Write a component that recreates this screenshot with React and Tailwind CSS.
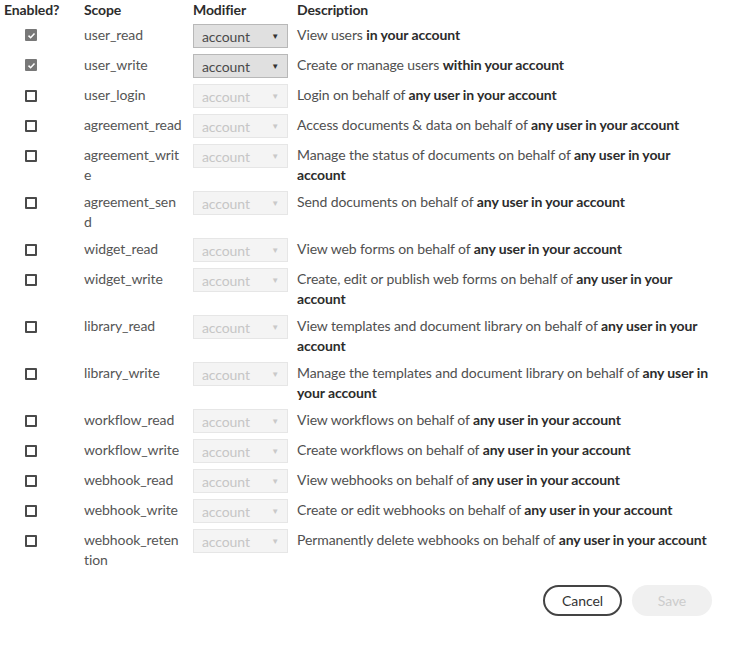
import React, { useState } from "react";

const SCOPES = [
  { name: "user_read", on: true, pre: "View users ", bold: "in your account" },
  { name: "user_write", on: true, pre: "Create or manage users ", bold: "within your account" },
  { name: "user_login", pre: "Login on behalf of ", bold: "any user in your account" },
  { name: "agreement_read", pre: "Access documents & data on behalf of ", bold: "any user in your account" },
  { name: "agreement_writ\ne", pre: "Manage the status of documents on behalf of ", bold: "any user in your\naccount" },
  { name: "agreement_sen\nd", pre: "Send documents on behalf of ", bold: "any user in your account" },
  { name: "widget_read", pre: "View web forms on behalf of ", bold: "any user in your account" },
  { name: "widget_write", pre: "Create, edit or publish web forms on behalf of ", bold: "any user in your\naccount" },
  { name: "library_read", pre: "View templates and document library on behalf of ", bold: "any user in your\naccount" },
  { name: "library_write", pre: "Manage the templates and document library on behalf of ", bold: "any user in\nyour account" },
  { name: "workflow_read", pre: "View workflows on behalf of ", bold: "any user in your account" },
  { name: "workflow_write", pre: "Create workflows on behalf of ", bold: "any user in your account" },
  { name: "webhook_read", pre: "View webhooks on behalf of ", bold: "any user in your account" },
  { name: "webhook_write", pre: "Create or edit webhooks on behalf of ", bold: "any user in your account" },
  { name: "webhook_reten\ntion", pre: "Permanently delete webhooks on behalf of ", bold: "any user in your account" },
];

function Checkbox({ checked, onClick }) {
  if (checked) {
    return (
      <button onClick={onClick} className="mt-[5px] ml-[21px] flex h-3 w-3 items-center justify-center rounded-[1px] bg-[#787878]">
        <svg viewBox="0 0 12 12" className="h-[9px] w-[9px]">
          <path d="M2 6.2 L4.8 9 L10 3.2" fill="none" stroke="#fff" strokeWidth="2" />
        </svg>
      </button>
    );
  }
  return (
    <button onClick={onClick} className="mt-[5px] ml-[21px] h-3 w-3 rounded-[1px] border-2 border-[#4a4a4a] bg-white" />
  );
}

function Modifier({ enabled }) {
  return (
    <div
      className={
        "flex h-6 w-[95px] items-center justify-between border pl-2 pr-2 " +
        (enabled ? "border-[#b8b8b8] bg-[#e0e0e0] text-[#4b4b4b]" : "border-[#e6e6e6] bg-[#f4f4f4] text-[#c6c6c6]")
      }
    >
      <span className="pt-[2px] text-[14px] leading-5">account</span>
      <span className={"text-[8px] " + (enabled ? "text-[#333]" : "text-[#c9c9c9]")}>▼</span>
    </div>
  );
}

export default function App() {
  const [enabled, setEnabled] = useState(SCOPES.map((s) => !!s.on));

  const toggle = (i) => setEnabled((prev) => prev.map((v, j) => (j === i ? !v : v)));

  return (
    <div className="w-[736px] h-[648px] bg-white pl-1 font-['Lato',sans-serif] text-[14px] tracking-[-0.1px] text-[#505050]">
      <div className="grid grid-cols-[80px_109px_104px_435px] pb-[1px] text-[14px] leading-5 font-bold text-[#2c2c2c]">
        <div>Enabled?</div>
        <div>Scope</div>
        <div>Modifier</div>
        <div>Description</div>
      </div>

      {SCOPES.map((s, i) => (
        <div key={s.name} className="grid grid-cols-[80px_109px_104px_435px] items-start py-[3px]">
          <div>
            <Checkbox checked={enabled[i]} onClick={() => toggle(i)} />
          </div>
          <div className="mt-[1px] whitespace-pre-line leading-5 text-[#555]">{s.name}</div>
          <div>
            <Modifier enabled={enabled[i]} />
          </div>
          <div className="mt-[1px] whitespace-pre-line leading-5">
            {s.pre}
            <span className="font-bold text-[#2c2c2c]">{s.bold}</span>
          </div>
        </div>
      ))}

      <div className="mt-3 flex justify-end gap-[10px] pr-6">
        <button className="h-[31px] w-[79px] rounded-full border-2 border-[#444] text-[14px] text-[#333]">Cancel</button>
        <button className="h-[31px] w-[80px] rounded-full bg-[#f0f0f0] text-[14px] text-[#cccccc]">Save</button>
      </div>
    </div>
  );
}
